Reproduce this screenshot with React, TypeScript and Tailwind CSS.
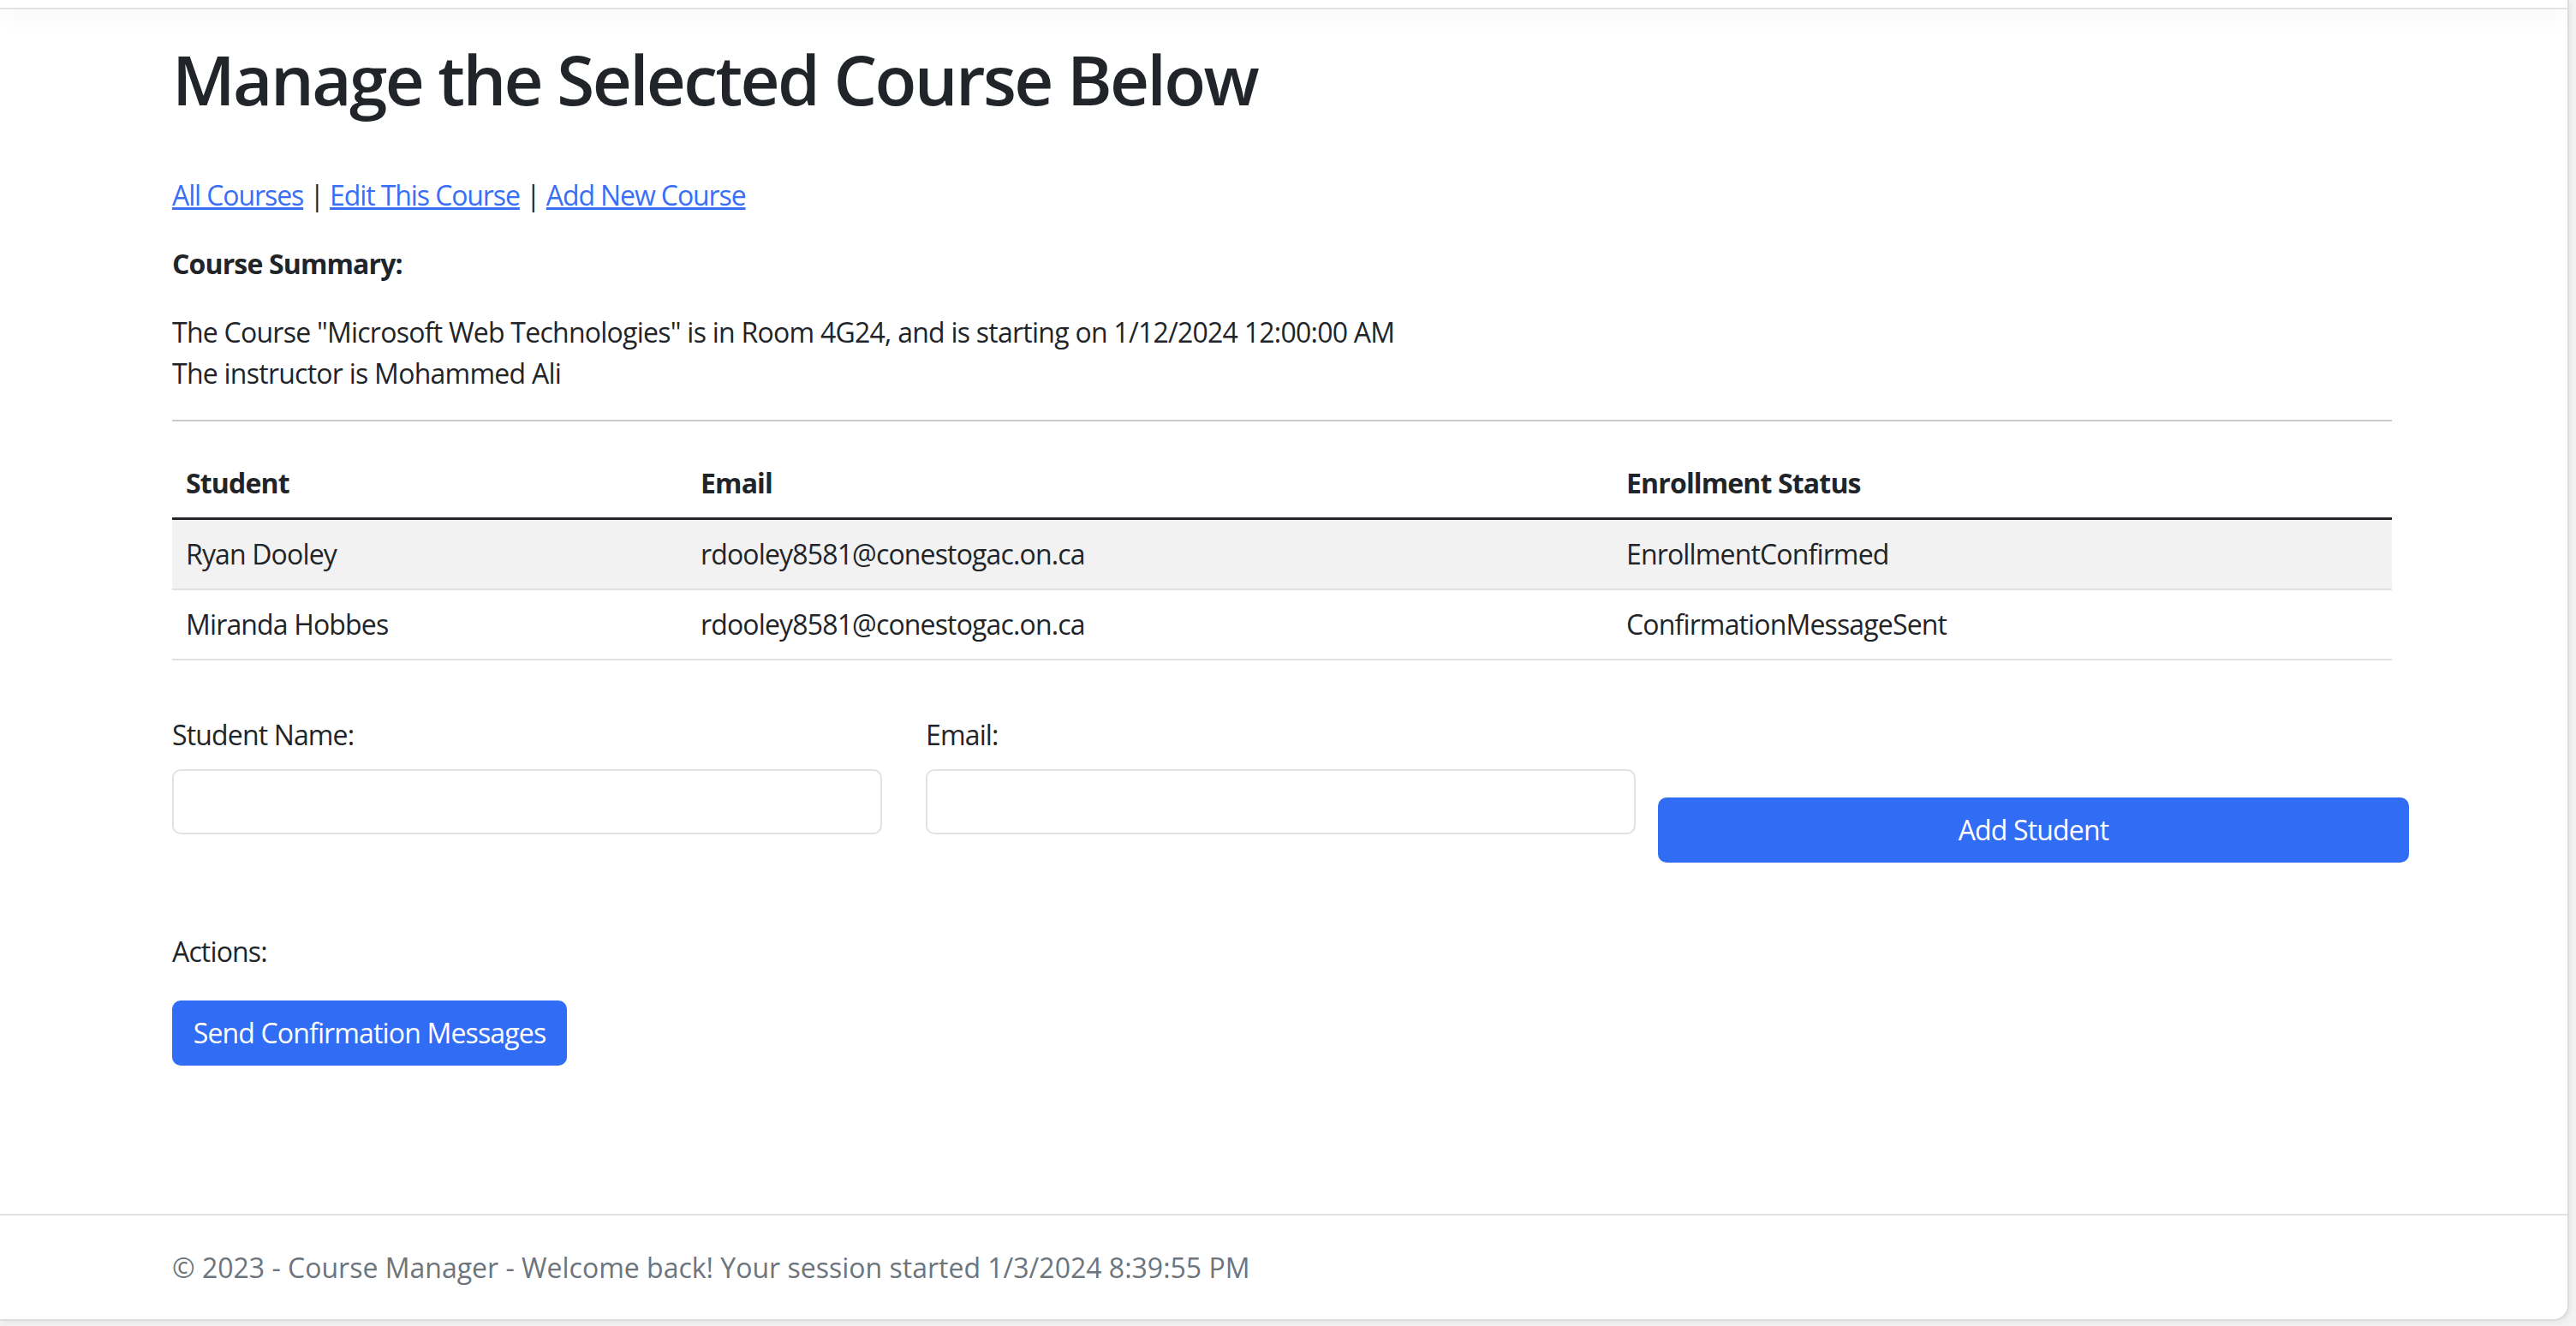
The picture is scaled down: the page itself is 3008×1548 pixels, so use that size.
import React from "react";

interface Student {
  name: string;
  email: string;
  status: string;
}

const students: Student[] = [
  { name: "Ryan Dooley", email: "rdooley8581@conestogac.on.ca", status: "EnrollmentConfirmed" },
  { name: "Miranda Hobbes", email: "rdooley8581@conestogac.on.ca", status: "ConfirmationMessageSent" },
];

export default function App() {
  return (
    <div className="w-[3008px] h-[1548px] bg-[#f3f3f3] overflow-hidden font-['Open_Sans',sans-serif] text-[#212529] tracking-[-0.85px]">
      <div className="w-[3000px] h-[1542px] bg-white border-r-2 border-b-2 border-[#dcdcdc] rounded-br-[18px] flex flex-col overflow-hidden shadow-[2px_2px_6px_rgba(0,0,0,0.06)]">
        {/* navbar remnant */}
        <div className="h-[11px] shrink-0 bg-white border-b-2 border-[#e3e3e3] shadow-[0_8px_24px_rgba(0,0,0,0.05)]" />

        <main className="flex-1 pl-[201px]">
          <div className="w-[2592px]">
            <h1 className="mt-[33px] text-[80px] leading-[96px] font-semibold tracking-[-2.6px]">Manage the Selected Course Below</h1>

            <p className="mt-[64px] text-[32px] leading-[48px] tracking-[-1.1px]">
              <a href="#" className="text-[#3a6ff5] underline">All Courses</a>
              {" | "}
              <a href="#" className="text-[#3a6ff5] underline">Edit This Course</a>
              {" | "}
              <a href="#" className="text-[#3a6ff5] underline">Add New Course</a>
            </p>

            <p className="mt-[32px] text-[32px] leading-[48px] font-bold">Course Summary:</p>

            <p className="mt-[32px] text-[32px] leading-[48px] tracking-[-0.75px]">
              The Course "Microsoft Web Technologies" is in Room 4G24, and is starting on 1/12/2024 12:00:00 AM
              <br />
              The instructor is Mohammed Ali
            </p>

            <hr className="mt-[30px] border-0 border-t-2 border-[#c8c9ca]" />

            <table className="mt-[32px] w-[2592px] border-collapse text-[32px] leading-[48px]">
              <thead>
                <tr className="border-b-[3px] border-[#212529]">
                  <th className="w-[601px] px-[16px] py-[16px] text-left font-bold">Student</th>
                  <th className="w-[1081px] px-[16px] py-[16px] text-left font-bold">Email</th>
                  <th className="px-[16px] py-[16px] text-left font-bold">Enrollment Status</th>
                </tr>
              </thead>
              <tbody>
                {students.map((s, i) => (
                  <tr key={s.name} className={`border-b-2 border-[#dee2e6] ${i === 0 ? "bg-[#f2f2f2]" : ""}`}>
                    <td className="px-[16px] py-[16px]">{s.name}</td>
                    <td className="px-[16px] py-[16px]">{s.email}</td>
                    <td className="px-[16px] py-[16px]">{s.status}</td>
                  </tr>
                ))}
              </tbody>
            </table>

            {/* add student form */}
            <div className="mt-[63px] flex items-start text-[32px] leading-[48px]">
              <div className="w-[829px] shrink-0 flex flex-col">
                <label>Student Name:</label>
                <input className="mt-[16px] h-[76px] border-2 border-[#dee2e6] rounded-[10px] bg-white" />
              </div>
              <div className="ml-[51px] w-[829px] shrink-0 flex flex-col">
                <label>Email:</label>
                <input className="mt-[16px] h-[76px] border-2 border-[#dee2e6] rounded-[10px] bg-white" />
              </div>
              <button className="ml-[26px] mt-[97px] w-[877px] shrink-0 h-[76px] rounded-[10px] bg-[#316cf4] text-white">
                Add Student
              </button>
            </div>

            <p className="mt-[80px] text-[32px] leading-[48px]">Actions:</p>
            <button className="mt-[33px] w-[461px] h-[76px] rounded-[10px] bg-[#316cf4] text-white text-[32px] leading-[48px]">
              Send Confirmation Messages
            </button>
          </div>
        </main>

        <footer className="h-[123px] shrink-0 border-t-2 border-[#dee2e6] pl-[201px] flex items-center text-[32px] leading-[48px] tracking-normal text-[#6c757d]">
          © 2023 - Course Manager - Welcome back! Your session started 1/3/2024 8:39:55 PM
        </footer>
      </div>
    </div>
  );
}
